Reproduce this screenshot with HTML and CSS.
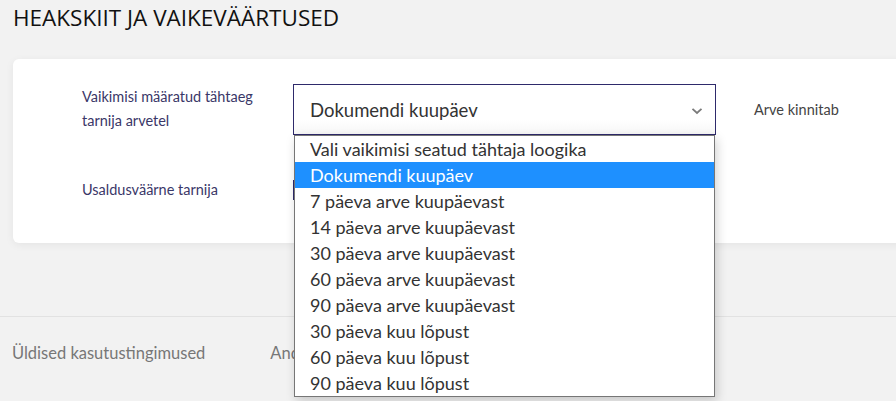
FILE: index.html
```html
<!DOCTYPE html>
<html lang="et">
<head>
    <meta charset="UTF-8">
    <meta name="viewport" content="width=device-width, initial-scale=1.0">
    <title>Heakskiit ja vaikeväärtused</title>
    <link rel="stylesheet" href="styles.css">
</head>
<body>

    <div class="page">
        <h1>HEAKSKIIT JA VAIKEVÄÄRTUSED</h1>

        <!-- Settings card -->
        <div class="card">
            <div class="row">
                <div class="label">Vaikimisi määratud tähtaeg tarnija arvetel</div>
                <div class="select-wrap">
                    <div class="select">
                        <span>Dokumendi kuupäev</span>
                        <svg class="chevron" width="12" height="8" viewBox="0 0 12 8">
                            <path d="M1.5 1.8 L6 6 L10.5 1.8" fill="none" stroke="#7a7a7a" stroke-width="1.8"/>
                        </svg>
                    </div>
                    <ul class="dropdown">
                        <li>Vali vaikimisi seatud tähtaja loogika</li>
                        <li class="selected">Dokumendi kuupäev</li>
                        <li>7 päeva arve kuupäevast</li>
                        <li>14 päeva arve kuupäevast</li>
                        <li>30 päeva arve kuupäevast</li>
                        <li>60 päeva arve kuupäevast</li>
                        <li>90 päeva arve kuupäevast</li>
                        <li>30 päeva kuu lõpust</li>
                        <li>60 päeva kuu lõpust</li>
                        <li>90 päeva kuu lõpust</li>
                    </ul>
                </div>
                <div class="side-label">Arve kinnitab</div>
            </div>

            <div class="row row-second">
                <div class="label">Usaldusväärne tarnija</div>
                <div class="toggle"></div>
            </div>
        </div>

        <!-- Footer -->
        <div class="footer">
            <a href="#">Üldised kasutustingimused</a>
            <a href="#">Andmekaitsetingimused</a>
        </div>
    </div>

</body>
</html>
```

FILE: styles.css
```css
body {
    margin: 0;
    background-color: #f2f2f2;
    font-family: "Lato", "Noto Sans", sans-serif;
    color: #333;
    overflow: hidden;
}

.page {
    width: 896px;
    height: 401px;
    overflow: hidden;
}

h1 {
    margin: 0;
    padding: 2px 0 0 13px;
    height: 56px;
    box-sizing: border-box;
    font-family: "Open Sans", sans-serif;
    font-weight: 400;
    font-size: 22.5px;
    color: #111;
}

.card {
    margin-left: 13px;
    margin-top: 3px;
    width: 920px;
    height: 184px;
    box-sizing: border-box;
    padding: 25px 0 0 69px;
    background-color: white;
    border-radius: 6px;
    box-shadow: 0 2px 8px rgba(0, 0, 0, 0.06);
}

.row {
    display: flex;
    align-items: flex-start;
}

.row-second {
    margin-top: 43px;
    align-items: center;
}

.label {
    width: 190px;
    margin-right: 21px;
    font-size: 14.5px;
    line-height: 24px;
    color: #3a3768;
}

.row:first-child .label {
    margin-top: 1px;
}

.select-wrap {
    position: relative;
    width: 423px;
}

.select {
    height: 51px;
    box-sizing: border-box;
    border: 1px solid #2e2a6b;
    padding: 0 12px 0 16px;
    display: flex;
    align-items: center;
    justify-content: space-between;
    font-size: 18.5px;
    color: #333;
    background: linear-gradient(#fff 70%, #f7f7f7);
}

.chevron {
    margin-top: 2px;
}

.side-label {
    margin-left: 38px;
    line-height: 51px;
    font-size: 14.5px;
    color: #444;
}

.toggle {
    width: 20px;
    height: 20px;
    box-sizing: border-box;
    border: 1px solid #2e2a6b;
    background-color: white;
}

/* Open list of the select */
.dropdown {
    position: absolute;
    top: 51px;
    left: 1px;
    width: 421px;
    box-sizing: border-box;
    margin: 0;
    padding: 0;
    list-style: none;
    background-color: white;
    border: 1px solid #767676;
    box-shadow: 2px 4px 10px rgba(0, 0, 0, 0.18);
    z-index: 10;
}

.dropdown li {
    height: 26px;
    line-height: 26px;
    padding-left: 15px;
    font-size: 18px;
    color: #333;
}

.dropdown li.selected {
    background-color: #1e90ff;
    color: white;
}

.footer {
    margin-top: 73px;
    border-top: 1px solid #e2e2e2;
    padding: 26px 0 0 12px;
    display: flex;
    gap: 65px;
}

.footer a {
    font-size: 16.5px;
    color: #777;
    text-decoration: none;
}
```
